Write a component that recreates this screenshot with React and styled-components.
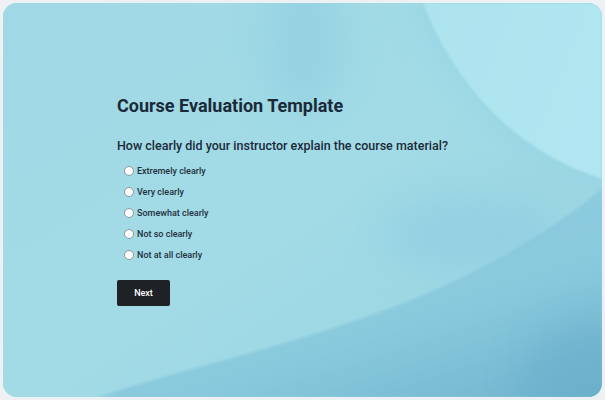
import React from "react";
import styled, { createGlobalStyle } from "styled-components";

const Global = createGlobalStyle`
  html, body { margin: 0; padding: 0; background: #eef1f3; }
  body { font-family: Roboto, "Liberation Sans", sans-serif; }
  * { box-sizing: border-box; }
`;

const Frame = styled.div`
  width: 605px;
  height: 400px;
  padding: 3px;
  background: #eef1f3;
`;

const Card = styled.div`
  position: relative;
  width: 599px;
  height: 394px;
  border-radius: 14px;
  overflow: hidden;
  background: #a1dae5;
`;

const Backdrop = styled.svg`
  position: absolute;
  inset: 0;
  width: 100%;
  height: 100%;
`;

const Content = styled.div`
  position: relative;
  display: flex;
  flex-direction: column;
  align-items: flex-start;
  padding: 92px 0 0 114px;
  color: #1b2a38;
  font-family: Roboto, "Liberation Sans", sans-serif;
`;

const Title = styled.h1`
  margin: 0;
  font-size: 18px;
  font-weight: 700;
  line-height: 22px;
`;

const Question = styled.h2`
  margin: 20px 0 0;
  font-size: 12.5px;
  font-weight: 500;
  line-height: 18px;
`;

const Options = styled.div`
  display: flex;
  flex-direction: column;
  gap: 7px;
  margin: 9px 0 0 7px;
`;

const Option = styled.label`
  display: flex;
  align-items: center;
  gap: 3px;
  height: 14px;
  font-size: 9px;
  font-weight: 500;
  color: #1f2f3d;
`;

const Radio = styled.span`
  width: 10px;
  height: 10px;
  border-radius: 50%;
  background: #ffffff;
  border: 1px solid #8a97a0;
  flex: none;
`;

const Button = styled.button`
  margin-top: 18px;
  width: 53px;
  height: 26px;
  border: none;
  border-radius: 2px;
  background: #1e2226;
  color: #ffffff;
  font-family: Roboto, "Liberation Sans", sans-serif;
  font-size: 9px;
  font-weight: 500;
  padding: 0;
`;

const options = [
  "Extremely clearly",
  "Very clearly",
  "Somewhat clearly",
  "Not so clearly",
  "Not at all clearly",
];

export default function App() {
  return (
    <>
      <Global />
      <Frame>
        <Card>
          <Backdrop viewBox="0 0 599 394" preserveAspectRatio="none">
            <defs>
              <linearGradient id="base" x1="0" y1="0" x2="1" y2="1">
                <stop offset="0" stopColor="#a0d9e5" />
                <stop offset="0.5" stopColor="#a2dbe6" />
                <stop offset="1" stopColor="#98d3e2" />
              </linearGradient>
              <linearGradient id="top" x1="0" y1="0" x2="1" y2="0.4">
                <stop offset="0" stopColor="#ade3ee" />
                <stop offset="1" stopColor="#b0e6f1" />
              </linearGradient>
              <linearGradient id="bottom" x1="0.2" y1="0" x2="1" y2="1">
                <stop offset="0" stopColor="#93d0e1" />
                <stop offset="0.6" stopColor="#89c9dd" />
                <stop offset="1" stopColor="#6fb3cd" />
              </linearGradient>
              <filter id="blur" x="-50%" y="-50%" width="200%" height="200%">
                <feGaussianBlur stdDeviation="18" />
              </filter>
              <filter id="soft" x="-10%" y="-10%" width="120%" height="120%">
                <feGaussianBlur stdDeviation="1.2" />
              </filter>
            </defs>
            <rect width="599" height="394" fill="url(#base)" />
            <ellipse cx="300" cy="40" rx="40" ry="70" fill="#8ecde0" opacity="0.6" filter="url(#blur)" />
            <ellipse cx="470" cy="230" rx="90" ry="40" fill="#8ccbdf" opacity="0.55" filter="url(#blur)" />
            <path d="M 410 -20 C 440 70, 500 150, 620 182 L 620 -20 Z" fill="#8fcfe1" opacity="0.6" filter="url(#blur)" />
            <path d="M 420 0 C 450 78, 510 148, 599 176 L 599 0 Z" fill="url(#top)" filter="url(#soft)" />
            <path d="M 95 394 C 240 345, 440 318, 599 186 L 599 394 Z" fill="#85c6db" opacity="0.7" filter="url(#soft)" />
            <path d="M 100 394 C 245 347, 445 320, 599 190 L 599 394 Z" fill="url(#bottom)" filter="url(#soft)" />
            <ellipse cx="590" cy="380" rx="70" ry="60" fill="#6aaecb" opacity="0.6" filter="url(#blur)" />
          </Backdrop>
          <Content>
            <Title>Course Evaluation Template</Title>
            <Question>How clearly did your instructor explain the course material?</Question>
            <Options>
              {options.map((o) => (
                <Option key={o}>
                  <Radio />
                  {o}
                </Option>
              ))}
            </Options>
            <Button>Next</Button>
          </Content>
        </Card>
      </Frame>
    </>
  );
}
